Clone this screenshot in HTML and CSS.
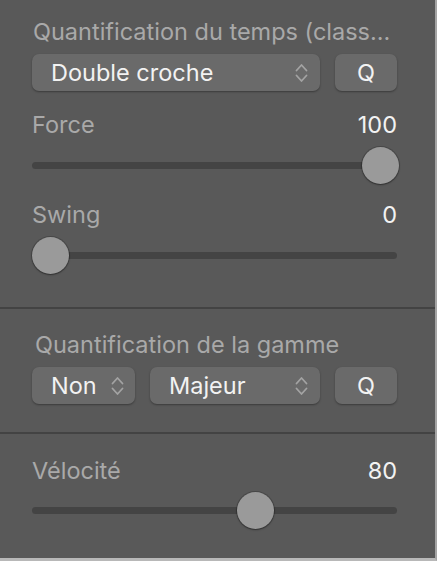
FILE: index.html
```html
<!DOCTYPE html>
<html>
<head>
    <title>Quantification</title>
    <link rel="stylesheet" href="styles.css">
</head>
<body>
    <div class="panel">
        <div class="section">
            <div class="title">Quantification du temps (class...</div>
            <div class="row">
                <div class="popup wide">
                    <span>Double croche</span>
                    <svg class="chev" width="13" height="20" viewBox="0 0 13 20"><path d="M1.5 7.5 L6.5 2 L11.5 7.5 M1.5 12.5 L6.5 18 L11.5 12.5" fill="none" stroke="#a3a3a3" stroke-width="1.8" stroke-linecap="round" stroke-linejoin="round"/></svg>
                </div>
                <div class="button">Q</div>
            </div>
            <div class="slider">
                <div class="head"><span class="label">Force</span><span class="value">100</span></div>
                <div class="track"><div class="thumb" style="left: 330px"></div></div>
            </div>
            <div class="slider second">
                <div class="head"><span class="label">Swing</span><span class="value">0</span></div>
                <div class="track"><div class="thumb" style="left: 0px"></div></div>
            </div>
        </div>
        <div class="section scale">
            <div class="title">Quantification de la gamme</div>
            <div class="row">
                <div class="popup small">
                    <span>Non</span>
                    <svg class="chev" width="13" height="20" viewBox="0 0 13 20"><path d="M1.5 7.5 L6.5 2 L11.5 7.5 M1.5 12.5 L6.5 18 L11.5 12.5" fill="none" stroke="#a3a3a3" stroke-width="1.8" stroke-linecap="round" stroke-linejoin="round"/></svg>
                </div>
                <div class="popup mid">
                    <span>Majeur</span>
                    <svg class="chev" width="13" height="20" viewBox="0 0 13 20"><path d="M1.5 7.5 L6.5 2 L11.5 7.5 M1.5 12.5 L6.5 18 L11.5 12.5" fill="none" stroke="#a3a3a3" stroke-width="1.8" stroke-linecap="round" stroke-linejoin="round"/></svg>
                </div>
                <div class="button">Q</div>
            </div>
        </div>
        <div class="section velo">
            <div class="slider">
                <div class="head"><span class="label">Vélocité</span><span class="value">80</span></div>
                <div class="track"><div class="thumb" style="left: 205px"></div></div>
            </div>
        </div>
    </div>
</body>
</html>
```

FILE: styles.css
```css
body { margin: 0; background: #ffffff; font-family: Inter, "Liberation Sans", Arial, sans-serif; }
.panel { width: 437px; height: 561px; background: #595959; border-right: 2px solid #a4a4a4; border-bottom: 3px solid #b8b8b8; box-sizing: border-box; }
.section { padding: 0 38px 0 32px; box-sizing: border-box; }
.section + .section { border-top: 2px solid #434343; }
.section:first-child { padding-top: 18px; height: 307px; }
.scale { padding-top: 22px; height: 125px; }
.velo { padding-top: 23px; }
.title { color: #a9a9a9; font-size: 23.5px; line-height: 27px; margin-left: 1px; }
.scale .title { margin-left: 3px; }
.row { display: flex; gap: 15px; margin-top: 9px; }
.popup, .button { height: 37px; background: #6a6a6a; border-radius: 7px; box-shadow: 0 1px 2px rgba(0, 0, 0, 0.35); color: #f2f2f2; font-size: 23.5px; display: flex; align-items: center; box-sizing: border-box; }
.popup { justify-content: space-between; padding: 0 12px 0 19px; }
.wide { width: 288px; }
.small { width: 103px; padding-right: 11px; }
.mid { width: 170px; }
.button { width: 62px; justify-content: center; }
.chev { display: block; }
.slider { margin-top: 20px; }
.slider.second { margin-top: 32px; }
.velo .slider { margin-top: 0; }
.head { display: flex; justify-content: space-between; font-size: 23.5px; line-height: 27px; }
.label { color: #a9a9a9; }
.value { color: #f2f2f2; }
.track { position: relative; height: 7px; border-radius: 4px; background: #444444; margin-top: 24px; }
.velo .track { margin-top: 23px; }
.thumb { position: absolute; top: -15px; width: 37px; height: 37px; border-radius: 50%; background: #9a9a9a; box-shadow: 0 0 0 1px rgba(0, 0, 0, 0.18), 0 1px 2px rgba(0, 0, 0, 0.35); }
```
